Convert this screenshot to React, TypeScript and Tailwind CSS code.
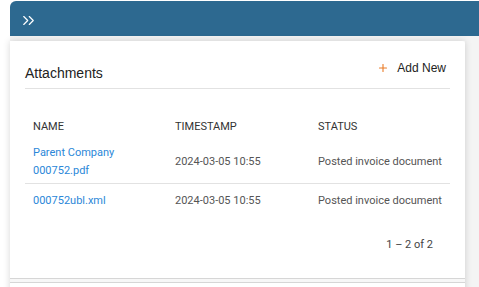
import React from "react";
import { ChevronsRight, Plus } from "lucide-react";

const rows = [
  { name: ["Parent Company", "000752.pdf"], time: "2024-03-05 10:55", status: "Posted invoice document" },
  { name: ["000752ubl.xml"], time: "2024-03-05 10:55", status: "Posted invoice document" },
];

export default function App() {
  return (
    <div
      className="w-[479px] h-[287px] overflow-hidden bg-white pl-[10px] pt-px"
      style={{ fontFamily: "Roboto, 'Liberation Sans', sans-serif" }}
    >
      {/* HEADER BAR */}
      <div className="h-[35px] bg-[#2d6990] rounded-tl-[6px] flex items-center pl-[9px] pt-[3px]">
        <ChevronsRight size={19} strokeWidth={1.5} className="text-white" />
      </div>

      {/* BODY */}
      <div className="bg-[#f4f4f4] pt-[5px] pr-[14px] h-full">
        <div className="shadow-[0_0_7px_rgba(0,0,0,0.16)]">
          <div className="bg-white rounded-tr-[3px] px-[15px] border-b border-[#d6d6d6] h-[238px]">
            <div className="flex items-end justify-between h-[48px] border-b border-[#e2e2e2]">
              <h2 className="text-[14px] text-[#222] pb-[4px]" style={{ fontFamily: "'Liberation Sans', Arial, sans-serif" }}>
                Attachments
              </h2>
              <button
                className="flex items-center gap-[8px] text-[12px] text-[#222] pb-[11px] pr-[4px]"
                style={{ fontFamily: "'Liberation Sans', Arial, sans-serif" }}
              >
                <Plus size={12} strokeWidth={2.2} className="text-[#ea7a25]" />
                <span>Add New</span>
              </button>
            </div>

            <table className="w-full mt-[24px] text-[11px] text-[#333]">
              <thead>
                <tr className="h-[28px] text-left">
                  <th className="font-normal px-[8px] w-[142px]">NAME</th>
                  <th className="font-normal px-[8px] w-[143px]">TIMESTAMP</th>
                  <th className="font-normal px-[8px]">STATUS</th>
                </tr>
              </thead>
              <tbody>
                {rows.map((row, i) => (
                  <tr key={i} className={i === 0 ? "border-b border-[#e2e2e2] h-[42px]" : "h-[36px]"}>
                    <td className="px-[8px] text-[#2b87d8] leading-[18px]">
                      {row.name.map((n) => (
                        <div key={n}>{n}</div>
                      ))}
                    </td>
                    <td className="px-[8px] text-[#555]">{row.time}</td>
                    <td className="px-[8px] text-[#555] whitespace-nowrap">{row.status}</td>
                  </tr>
                ))}
              </tbody>
            </table>

            <div className="flex justify-end pr-[17px] mt-[18px] text-[11px] text-[#444]">1 – 2 of 2</div>
          </div>
          <div className="h-[4px] bg-[#f7f7f7] border-b border-[#d6d6d6]" />
          <div className="h-[20px] bg-white" />
        </div>
      </div>
    </div>
  );
}
